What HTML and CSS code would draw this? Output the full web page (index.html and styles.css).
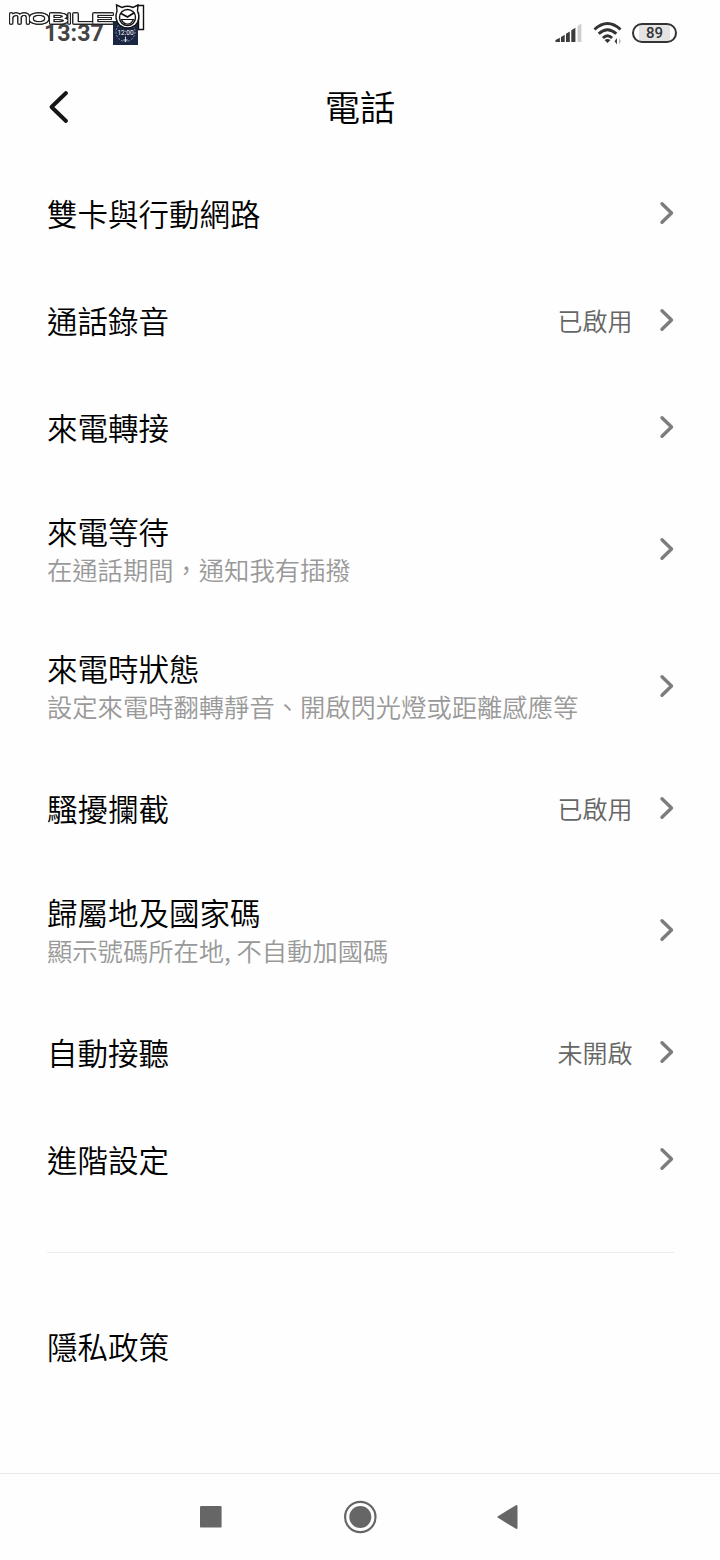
FILE: index.html
```html
<!DOCTYPE html>
<html lang="zh-Hant">
<head>
    <meta charset="UTF-8">
    <meta name="viewport" content="width=device-width, initial-scale=1.0">
    <title>電話</title>
    <link rel="stylesheet" href="styles.css">
</head>
<body>
    <svg class="defs" width="0" height="0">
        <symbol id="chevron" viewBox="0 0 16 24">
            <path d="M3 2.8 L12.5 12 L3 21.2" fill="none" stroke="#7c7c7c" stroke-width="3.4" stroke-linecap="round" stroke-linejoin="round"/>
        </symbol>
    </svg>

    <div class="status-bar">
        <span class="time">13:37</span>
        <svg class="clock-app" width="25" height="24" viewBox="0 0 25 24">
            <rect width="25" height="24" fill="#1b2742"/>
            <circle cx="12.5" cy="11" r="9.5" fill="none" stroke="#8b94a8" stroke-width="1" stroke-dasharray="2 1.5"/>
            <text class="clock-text" x="12.5" y="14" text-anchor="middle">12:00</text>
            <path d="M12.5 15.5 V21 M10.5 19 H14.5" stroke="#d5dae4" stroke-width="1"/>
        </svg>
        <div class="status-icons">
            <svg width="28" height="20" viewBox="0 0 28 20">
                <path d="M.5 19 V17 L4.9 14.8 V19 Z M6 19 V14 L9.7 11.8 V19 Z M11 19 V10.8 L14.8 8.4 V19 Z M16.3 19 V7.3 L20.4 4.8 V19 Z" fill="#3c3c3c"/>
                <path d="M22.6 19 V3 L26.4 .5 V19 Z" fill="#cfcfcf"/>
            </svg>
            <svg class="wifi" width="30" height="24" viewBox="0 0 30 24">
                <path d="M1.5 8.5 Q14.5 -3.5 27.5 8.5 M5.7 12.8 Q14.5 4.6 23.3 12.8 M9.9 17 Q14.5 12.6 19.1 17" fill="none" stroke="#333" stroke-width="2.9"/>
                <path d="M11.5 18.9 Q14.5 16.9 17.5 18.9 L14.5 22 Z" fill="#333"/>
                <path d="M24 17 V23.5 L21.5 20.2 Z" fill="#444"/>
                <path d="M26 17 V23.5 L28 20.2 Z" fill="#bbb"/>
            </svg>
            <div class="battery"><span>89</span></div>
        </div>
    </div>

    <svg class="watermark" width="146" height="34" viewBox="0 0 146 34">
        <g class="watermark-text">
            <text class="small" x="9" y="22.5" textLength="21" lengthAdjust="spacingAndGlyphs">m</text>
            <text x="29" y="22.5" textLength="20" lengthAdjust="spacingAndGlyphs">O</text>
            <text x="48" y="22.5" textLength="20" lengthAdjust="spacingAndGlyphs">B</text>
            <text x="67.5" y="22.5">I</text>
            <text x="71" y="22.5" textLength="21" lengthAdjust="spacingAndGlyphs">L</text>
            <text x="91" y="22.5" textLength="22" lengthAdjust="spacingAndGlyphs">E</text>
        </g>
        <path d="M135.5 9 L138 5.5 H143.5 V29.5 H138.5 V13 H136 Z" fill="#fff" stroke="#111" stroke-width="1.4"/>
        <path d="M117 11 L116.5 5 L122 7.5 Q127.5 5 133 7.5 L138 5 L137.5 11 Q141 19 135.5 25 Q127.5 31 119.5 25 Q114 19 117 11 Z" fill="#fff" stroke="#111" stroke-width="1.4"/>
        <circle cx="127.5" cy="17.5" r="8" fill="#fff" stroke="#111" stroke-width="1.4"/>
        <path d="M121 13.5 L127.5 17 L134.5 12.5" fill="none" stroke="#111" stroke-width="1.8"/>
        <path d="M121.5 19.5 H133.5 Q131 24.5 127 24 Q123 23.5 121.5 19.5 Z" fill="none" stroke="#111" stroke-width="1.2"/>
    </svg>

    <div class="header">
        <svg class="back" width="24" height="36" viewBox="0 0 24 36">
            <path d="M19 4 L4.5 18 L19 32" fill="none" stroke="#161616" stroke-width="3.9" stroke-linecap="round" stroke-linejoin="round"/>
        </svg>
        <h1>電話</h1>
    </div>

    <div class="list">
        <div class="row">
            <div class="label">雙卡與行動網路</div>
            <svg class="chevron"><use href="#chevron"/></svg>
        </div>
        <div class="row">
            <div class="label">通話錄音</div>
            <span class="value">已啟用</span>
            <svg class="chevron"><use href="#chevron"/></svg>
        </div>
        <div class="row">
            <div class="label">來電轉接</div>
            <svg class="chevron"><use href="#chevron"/></svg>
        </div>
        <div class="row tall">
            <div class="label">來電等待<p>在通話期間，通知我有插撥</p></div>
            <svg class="chevron"><use href="#chevron"/></svg>
        </div>
        <div class="row tall">
            <div class="label">來電時狀態<p>設定來電時翻轉靜音、開啟閃光燈或距離感應等</p></div>
            <svg class="chevron"><use href="#chevron"/></svg>
        </div>
        <div class="row">
            <div class="label">騷擾攔截</div>
            <span class="value">已啟用</span>
            <svg class="chevron"><use href="#chevron"/></svg>
        </div>
        <div class="row tall">
            <div class="label">歸屬地及國家碼<p>顯示號碼所在地, 不自動加國碼</p></div>
            <svg class="chevron"><use href="#chevron"/></svg>
        </div>
        <div class="row">
            <div class="label">自動接聽</div>
            <span class="value">未開啟</span>
            <svg class="chevron"><use href="#chevron"/></svg>
        </div>
        <div class="row">
            <div class="label">進階設定</div>
            <svg class="chevron"><use href="#chevron"/></svg>
        </div>
        <hr>
        <div class="row">
            <div class="label">隱私政策</div>
        </div>
    </div>

    <div class="nav-bar">
        <svg width="36" height="36" viewBox="0 0 36 36">
            <rect x="7" y="7" width="21.6" height="21.6" rx="1.2" fill="#666"/>
        </svg>
        <svg width="36" height="36" viewBox="0 0 36 36">
            <circle cx="18.3" cy="18" r="15.2" fill="none" stroke="#666" stroke-width="2.2"/>
            <circle cx="18.3" cy="18" r="11" fill="#666"/>
        </svg>
        <svg width="36" height="36" viewBox="0 0 36 36">
            <path d="M7.5 18 L25.5 7 V29 Z" fill="#666" stroke="#666" stroke-width="2" stroke-linejoin="round"/>
        </svg>
    </div>
</body>
</html>
```

FILE: styles.css
```css
* {
    box-sizing: border-box;
}
body {
    margin: 0;
    height: 1560px;
    display: flex;
    flex-direction: column;
    background-color: #fefefe;
    color: #000;
    font-family: "Noto Sans CJK TC", sans-serif;
    font-weight: 350;
    overflow: hidden;
}
svg {
    display: block;
    flex: none;
}
.defs {
    position: absolute;
}
.status-bar {
    height: 66px;
    flex: none;
    display: flex;
    align-items: center;
    padding: 0 43px 0 44px;
}
.time {
    width: 69px;
    color: #444;
    font: bold 23.2px/28px Roboto, sans-serif;
}
.clock-text {
    fill: #fff;
    font: 6.5px Roboto, sans-serif;
}
.status-icons {
    display: flex;
    align-items: center;
    margin-left: auto;
}
.wifi {
    margin: 0 9px 0 10px;
}
.battery {
    width: 45px;
    height: 20px;
    padding: 2px;
    border: 2px solid #333;
    border-radius: 10px;
    background: linear-gradient(90deg, #fff 12%, #e4e4e4 12%, #e4e4e4 88%, #fff 88%);
    color: #333;
    font: 500 15px/13px Roboto, sans-serif;
    text-align: center;
}
/* site stamp over the status bar */
.watermark {
    position: absolute;
    left: 0;
    top: 0;
}
.watermark-text {
    fill: #fff;
    stroke: #fff;
    stroke-width: 0.9px;
    font: 100 12.5px Roboto, sans-serif;
    filter: drop-shadow(1px 0 0 #222) drop-shadow(-1px 0 0 #222) drop-shadow(0 1px 0 #222) drop-shadow(0 -1px 0 #222);
}
.watermark-text .small {
    font-size: 16px;
}
.header {
    height: 94px;
    flex: none;
    display: grid;
    grid-template-columns: 80px 1fr 80px;
    padding: 14px 0 0;
}
.back {
    margin: 9px 0 0 47px;
}
h1 {
    margin: 0;
    font-size: 35.3px;
    font-weight: 350;
    line-height: 52px;
    text-align: center;
}
.list {
    flex: 1;
    padding: 0 46px 0 47px;
}
.row {
    height: 106.7px;
    display: flex;
    align-items: center;
}
.row.tall {
    height: 137.4px;
}
.label {
    flex: 1;
    font-size: 30.5px;
    line-height: 42px;
}
.tall .label {
    padding-bottom: 2px;
}
.label p {
    margin: 0;
    color: #999;
    font-size: 25.3px;
    line-height: 34px;
}
.value {
    margin-right: 26px;
    padding-bottom: 1px;
    color: #666;
    font-size: 25px;
    line-height: 36px;
}
.chevron {
    width: 16px;
    height: 24px;
}
hr {
    height: 1px;
    margin: 39.5px 0 40px;
    border: none;
    background-color: #ececec;
}
.row .chevron {
    margin-right: -0.5px;
}
.nav-bar {
    height: 87px;
    flex: none;
    display: flex;
    justify-content: center;
    align-items: center;
    gap: 113px;
    border-top: 1px solid #e8e8e8;
}
```
